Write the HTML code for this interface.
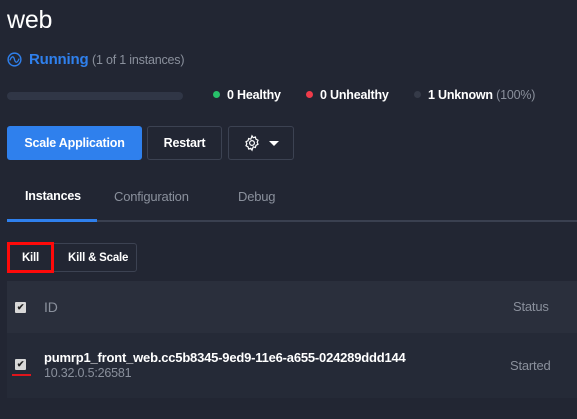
<!DOCTYPE html>
<html><head><meta charset="utf-8"><style>
*{margin:0;padding:0;box-sizing:border-box}
body{width:577px;height:419px;background:#222633;font-family:"Liberation Sans",sans-serif;color:#fff;position:relative;overflow:hidden;font-size:13px;letter-spacing:-0.2px}
.a{position:absolute;white-space:nowrap}
.btn{position:absolute;border:1px solid #3c4252;border-radius:3px;font-weight:bold;font-size:13px;display:flex;align-items:center;justify-content:center}
.dot{display:inline-block;width:7px;height:7px;border-radius:50%;margin-right:7px;vertical-align:1px}
.cb{position:absolute;width:11px;height:11px;background:#d8d8d8;border-radius:1px;color:#222;font-size:9px;line-height:11px;text-align:center;font-weight:bold}
</style></head><body>
<div class="a" style="left:7px;top:6px;font-size:25px">web</div>
<svg class="a" style="left:7px;top:52px" width="15" height="15" viewBox="0 0 16 16"><circle cx="8" cy="8" r="6.8" fill="none" stroke="#2f80ed" stroke-width="1.5"/><path d="M3 9 C5 4,7 4,8 8 C9 12,11 12,13 7" fill="none" stroke="#2f80ed" stroke-width="1.4"/></svg>
<div class="a" style="left:29px;top:51px;font-size:15px;color:#2f80ed;font-weight:bold">Running</div>
<div class="a" style="left:92px;top:53px;font-size:12.5px;color:#8a909c">(1 of 1 instances)</div>
<div class="a" style="left:7px;top:92px;width:176px;height:8px;border-radius:4px;background:#303646"></div>
<div class="a" style="left:213px;top:88px;font-weight:bold;font-size:12.5px"><span class="dot" style="background:#27c06a"></span>0 Healthy</div>
<div class="a" style="left:306px;top:88px;font-weight:bold;font-size:12.5px"><span class="dot" style="background:#ef3b4a"></span>0 Unhealthy</div>
<div class="a" style="left:414px;top:88px;font-weight:bold;font-size:12.5px"><span class="dot" style="background:#353a48"></span>1 Unknown <span style="font-weight:normal;color:#8a909c">(100%)</span></div>
<div class="btn" style="left:7px;top:126px;width:135px;height:34px;background:#2f80ed;border-color:#2f80ed;font-size:12.5px">Scale Application</div>
<div class="btn" style="left:147px;top:126px;width:75px;height:34px;font-size:12.5px">Restart</div>
<div class="btn" style="left:228px;top:126px;width:66px;height:34px">
<svg width="18" height="18" viewBox="0 0 24 24" fill="none" stroke="#fff" stroke-width="1.6"><circle cx="12" cy="12" r="3.2"/><path d="M12 2.5l1.6 2.4 2.9-.9.8 2.9 2.7 1.4-1.1 2.7 1.1 2.7-2.7 1.4-.8 2.9-2.9-.9L12 21.5l-1.6-2.4-2.9.9-.8-2.9-2.7-1.4 1.1-2.7L4 10.3l2.7-1.4.8-2.9 2.9.9z"/></svg>
<span style="margin-left:8px;border-left:5px solid transparent;border-right:5px solid transparent;border-top:5px solid #fff"></span></div>
<div class="a" style="left:25px;top:189px;font-weight:bold;font-size:12.5px">Instances</div>
<div class="a" style="left:114px;top:189px;color:#8a909c">Configuration</div>
<div class="a" style="left:238px;top:189px;color:#8a909c">Debug</div>
<div class="a" style="left:7px;top:220px;width:570px;height:2px;background:#3a4050"></div>
<div class="a" style="left:7px;top:219px;width:90px;height:3px;background:#2f80ed"></div>
<div class="btn" style="left:7px;top:243px;width:130px;height:29px;font-size:11.5px;justify-content:flex-start;padding-left:60px">Kill &amp; Scale</div>
<div class="a" style="left:7px;top:242px;width:47px;height:31px;border:3px solid #ff0a0a;font-weight:bold;font-size:11.5px;display:flex;align-items:center;justify-content:center">Kill</div>
<div class="a" style="left:7px;top:281px;width:570px;height:52px;background:#2a2f3c"></div>
<div class="cb" style="left:15px;top:302px">✔</div>
<div class="a" style="left:44px;top:299px;color:#8a909c;font-size:14px">ID</div>
<div class="a" style="left:513px;top:299px;color:#8a909c">Status</div>
<div class="a" style="left:7px;top:333px;width:570px;height:65px;background:#252a37"></div>
<div class="cb" style="left:15px;top:359px">✔</div>
<div class="a" style="left:12px;top:374px;width:19px;height:2px;background:#e0151c"></div>
<div class="a" style="left:44px;top:350px;font-weight:bold;font-size:13px">pumrp1_front_web.cc5b8345-9ed9-11e6-a655-024289ddd144</div>
<div class="a" style="left:44px;top:366px;color:#8a909c;font-size:12.5px">10.32.0.5:26581</div>
<div class="a" style="left:510px;top:358px;color:#8a909c">Started</div>
</body></html>
